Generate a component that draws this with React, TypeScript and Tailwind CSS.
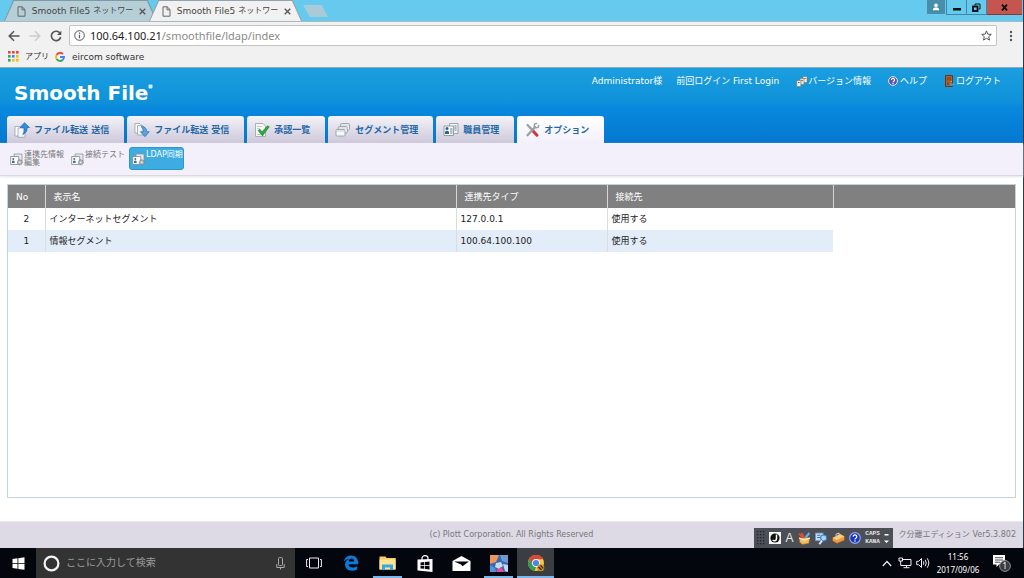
import * as React from "react";

const TABS = [
  { label: "ファイル転送 送信", icon: <SendIcon /> },
  { label: "ファイル転送 受信", icon: <ReceiveIcon /> },
  { label: "承認一覧", icon: <ApproveIcon /> },
  { label: "セグメント管理", icon: <SegmentIcon /> },
  { label: "職員管理", icon: <StaffIcon /> },
  { label: "オプション", icon: <ToolsIcon />, active: true },
];

const SUB_ITEMS = [
  { label: "連携先情報編集" },
  { label: "接続テスト" },
  { label: "LDAP同期", active: true },
];

const ROWS = [
  { no: 2, name: "インターネットセグメント", type: "127.0.0.1", target: "使用する" },
  { no: 1, name: "情報セグメント", type: "100.64.100.100", target: "使用する" },
];

export default function App() {
  return (
    <div className="flex min-h-screen flex-col bg-white font-['DejaVu_Sans','Noto_Sans_CJK_JP',sans-serif] text-[9px] leading-3 text-[#222]">
      <div className="flex flex-1 flex-col border-r border-[#2b3a45]">
        <BrowserTabs />
        <BrowserToolbar />
        <AppHeader />
        <SubNav />
        <main className="mx-[7px] mt-2 mb-[23px] flex-1 border border-[#c3d3dc]">
          <LdapTable />
        </main>
        <footer className="relative flex h-[27px] items-center justify-center border-t border-[#e9e7ee] bg-[#dddae5] text-[8px] text-[#777]">
          <p>(c) Plott Corporation. All Rights Reserved</p>
          <p className="absolute right-[7px]">ク分離エディション Ver5.3.802</p>
          <ImeBar />
        </footer>
      </div>
      <Taskbar />
    </div>
  );
}

// ─── Browser chrome ───────────────────────────────────────────────────────────
function BrowserTabs() {
  return (
    <div className="flex h-[22px] items-end justify-between border-b border-[#a9b9c1] bg-[#66caee]">
      <div className="flex h-full items-end pl-1">
        <BrowserTab />
        <BrowserTab active />
        <button
          aria-label="新しいタブ"
          className="mb-1 ml-[9px] h-3 w-[25px] bg-[#a9cbd8] [clip-path:polygon(0_0,75%_0,100%_100%,28%_100%)]"
        />
      </div>
      <div className="flex h-full items-start pr-px">
        <button aria-label="ユーザー" className="mr-px flex h-[14px] w-[18px] items-center justify-center bg-[#468ea9]">
          <svg width="8" height="8" viewBox="0 0 8 8" fill="#fff">
            <circle cx="4" cy="2.4" r="1.8" />
            <path d="M1 7.2V6c0-1 1.500-1.600 3-1.600s3 .6 3 1.600v1.200z" />
          </svg>
        </button>
        <button aria-label="最小化" className="flex h-[15px] w-[21px] items-center justify-center border border-t-0 border-[#3f87a3]">
          <svg width="8" height="8" viewBox="0 0 8 8"><path d="M0 5h8v2.500H0z" fill="#111" /></svg>
        </button>
        <button aria-label="元に戻す" className="flex h-[15px] w-5 items-center justify-center border-r border-b border-[#3f87a3]">
          <svg width="9" height="9" viewBox="0 0 9 9" fill="none" stroke="#111">
            <path d="M3 2.500V1h5v5H6.500" />
            <path d="M1 3.500h4.500V8H1z" strokeWidth="1.800" />
          </svg>
        </button>
        <button aria-label="閉じる" className="flex h-[15px] w-[35px] items-center justify-center border-b border-[#823a3a] bg-[#c4554f]">
          <svg width="7" height="7" viewBox="0 0 7 7"><path d="M1 .7l5 5.600M6 .7L1 6.300" stroke="#111" strokeWidth="1.900" /></svg>
        </button>
      </div>
    </div>
  );
}

function BrowserTab({ active }: { active?: boolean }) {
  return (
    <div
      className={
        "-mr-2 flex h-[21px] w-[153px] pt-px [clip-path:polygon(6%_0,94%_0,100%_100%,0_100%)] " +
        (active ? "z-10 bg-[#8fa5ae]" : "bg-[#7f9aa5]")
      }
    >
      <div
        className={
          "mx-px flex min-w-0 flex-1 items-center justify-between pr-2.5 pl-3 text-[#444] [clip-path:polygon(6%_0,94%_0,100%_100%,0_100%)] " +
          (active ? "bg-[#f1f1f1]" : "bg-[#b6cfd7]")
        }
      >
        <svg width="9" height="11" viewBox="0 0 9 11" fill="none" stroke="#666" className="shrink-0">
          <path d="M1 .8h4.200L8 3.600v6.600H1z" />
          <path d="M5 .8v3h3" />
        </svg>
        <span className="flex gap-[3px] whitespace-nowrap">
          <span>Smooth File5</span>
          <span className="text-[8px]">ネットワー</span>
        </span>
        <button aria-label="タブを閉じる">
          <svg width="7" height="7" viewBox="0 0 7 7"><path d="M.7.7l5.600 5.600M6.300.7L.7 6.300" stroke="#555" strokeWidth="1.300" /></svg>
        </button>
      </div>
    </div>
  );
}

function BrowserToolbar() {
  return (
    <div className="border-b border-[#8fa9b8] bg-[#f1f1f1]">
      <div className="flex items-center pt-[3px] pr-2.5 pl-2">
        <button aria-label="戻る" className="w-[21px]">
          <svg width="12" height="12" viewBox="0 0 12 12" fill="none" stroke="#555" strokeWidth="1.500">
            <path d="M11.500 6H1.500M6 1.200L1.200 6 6 10.800" />
          </svg>
        </button>
        <button aria-label="進む" className="w-[21px]">
          <svg width="12" height="12" viewBox="0 0 12 12" fill="none" stroke="#ccc" strokeWidth="1.500">
            <path d="M.5 6h10M6 1.200L10.800 6 6 10.800" />
          </svg>
        </button>
        <button aria-label="再読み込み" className="w-[19px]">
          <svg width="12" height="12" viewBox="0 0 12 12" fill="none" stroke="#555" strokeWidth="1.600">
            <path d="M10.200 3.600A4.700 4.700 0 1 0 10.700 7" />
            <path d="M11.300.8v4.300H7z" fill="#555" stroke="none" />
          </svg>
        </button>
        <div className="flex h-[21px] flex-1 items-center rounded-xs border border-[#c4c4c4] bg-white px-1 font-['Noto_Sans','Noto_Sans_CJK_JP',sans-serif] text-[11px]">
          <svg width="11" height="11" viewBox="0 0 11 11" fill="none" stroke="#555">
            <circle cx="5.500" cy="5.500" r="4.800" />
            <path d="M5.500 4.700v3.500M5.500 2.500v1.200" strokeWidth="1.200" />
          </svg>
          <a href="#url" className="ml-[5px] flex-1 text-[#8a8a8a]">
            <span className="text-[#222]">100.64.100.21</span>/smoothfile/ldap/index
          </a>
          <button aria-label="ブックマーク">
            <svg width="11" height="11" viewBox="0 0 11 11" fill="none" stroke="#555">
              <path d="M5.500.9l1.300 3.200 3.500.3-2.600 2.300.8 3.400-3-1.800-3 1.800.8-3.400L.7 4.400l3.500-.3z" />
            </svg>
          </button>
        </div>
        <button aria-label="メニュー" className="ml-3">
          <svg width="4" height="12" viewBox="0 0 4 12" fill="#555">
            <circle cx="2" cy="2" r="1.200" />
            <circle cx="2" cy="6" r="1.200" />
            <circle cx="2" cy="10" r="1.200" />
          </svg>
        </button>
      </div>
      <div className="flex h-[21px] items-center pl-2 text-[#333]">
        <AppsIcon />
        <a href="#apps" className="ml-1.5 w-[30px] text-[8px]">アプリ</a>
        <svg width="10" height="10" viewBox="0 0 10 10" fill="none" strokeWidth="1.900">
          <path d="M8 2.100A4 4 0 0 0 1.600 3" stroke="#ea4335" />
          <path d="M1.600 3a4 4 0 0 0 0 4" stroke="#fbbc05" />
          <path d="M1.600 7A4 4 0 0 0 7.600 8" stroke="#34a853" />
          <path d="M7.600 8A4 4 0 0 0 9 5H5" stroke="#4285f4" />
        </svg>
        <a href="#eircom" className="ml-[7px]">eircom software</a>
      </div>
    </div>
  );
}

function AppsIcon() {
  const colors = ["#ea4335", "#ea4335", "#ea4335", "#34a853", "#4285f4", "#fbbc05", "#34a853", "#fbbc05", "#fbbc05"];
  return (
    <svg width="11" height="11" viewBox="0 0 11 11">
      {colors.map((c, i) => (
        <rect key={i} x={(i % 3) * 4} y={Math.floor(i / 3) * 4} width="2.600" height="2.600" fill={c} />
      ))}
    </svg>
  );
}

// ─── Application header ───────────────────────────────────────────────────────
function AppHeader() {
  return (
    <header className="flex h-[75px] flex-col justify-between bg-[linear-gradient(#1b9fe0_0%,#0e91d8_46%,#0889dd_52%,#0578d2_100%)]">
      <div className="flex items-start justify-between pr-[22px] pl-3.5 text-white">
        <a href="#top" aria-label="Smooth File" className="mt-[15px] flex text-[20px] leading-5 font-bold">
          Smooth File
          <svg width="5" height="5" viewBox="0 0 5 5" className="mt-px"><rect x=".5" y=".5" width="4" height="4" rx="1" fill="#cfe9f8" /></svg>
        </a>
        <nav className="mt-[7px] flex items-center">
          <span>Administrator様</span>
          <span className="ml-3.5">前回ログイン First Login</span>
          <a href="#version" className="ml-[17px] flex items-center">
            <svg width="12" height="11" viewBox="0 0 12 11" stroke="#7d756b" strokeWidth=".6">
              <path d="M7 .5h4v6H7z" fill="#f7f3ea" />
              <path d="M4 2.500h4v6H4z" fill="#e9e1d2" />
              <path d="M.8 4.500h4v6h-4z" fill="#f4eee2" />
              <path d="M2 6.500h1.600M5.300 4.500h1.500M8.300 2.500h1.500" stroke="#6f675c" strokeWidth="1" />
            </svg>
            バージョン情報
          </a>
          <a href="#help" className="ml-[17px] flex items-center gap-0.5">
            <HelpBadge size={10} color="#5a53b5" ring="#e8e6fa" />
            ヘルプ
          </a>
          <a href="#logout" className="ml-[17px] flex items-center gap-px">
            <svg width="11" height="12" viewBox="0 0 11 12">
              <path d="M1.500.5h7v11h-7z" fill="#a85f31" stroke="#6d3716" />
              <path d="M3 2h1.500v3.500H3zM5.500 2H7v3.500H5.500zM3 7h1.500v3H3z" fill="#8a4722" />
              <path d="M6 9.500h4.500" stroke="#3fa3e6" strokeWidth="2" />
              <circle cx="7.200" cy="6.500" r=".6" fill="#f5cd73" />
            </svg>
            ログアウト
          </a>
        </nav>
      </div>
      <ul className="flex gap-[3px] pl-[7px]">
        {TABS.map((tab) => (
          <li key={tab.label}>
            <a
              href="#tab"
              className={
                "flex h-[27px] items-center gap-1 rounded-t-[3px] pr-[15px] pl-[7px] font-bold whitespace-nowrap text-[#1f68a8] " +
                (tab.active ? "bg-linear-to-b from-white to-[#f3f0fb]" : "bg-linear-to-b from-[#f4f2f8] to-[#cdc9da]")
              }
            >
              {tab.icon}
              {tab.label}
            </a>
          </li>
        ))}
      </ul>
    </header>
  );
}

function SubNav() {
  return (
    <nav className="flex h-[33px] gap-[3px] border-b border-[#d9d9df] bg-[#f3f0fb] pt-1 pl-[7px] text-[8px] leading-2 shadow-[0_1px_2px_#e4e4ea]">
      {SUB_ITEMS.map((item) => (
        <a
          key={item.label}
          href="#sub"
          className={
            "flex h-[23px] gap-px rounded-[3px] border pt-[3px] pl-0.5 " +
            (item.active
              ? "w-[55px] border-[#2d97cc] bg-[#3dace1] text-white"
              : "w-[58px] border-transparent text-[#777]")
          }
        >
          <SettingIcon />
          <span className="flex-1">{item.label}</span>
        </a>
      ))}
    </nav>
  );
}

function LdapTable() {
  return (
    <table className="w-full table-fixed border-collapse text-left">
      <colgroup>
        <col className="w-[37px]" />
        <col className="w-[411px]" />
        <col className="w-[151px]" />
        <col className="w-[226px]" />
        <col />
      </colgroup>
      <thead>
        <tr className="h-[23px] bg-[#808080] text-white [&>th]:border-r [&>th]:border-[#d5d5d5] [&>th]:px-2 [&>th]:font-normal">
          <th>No</th>
          <th>表示名</th>
          <th>連携先タイプ</th>
          <th>接続先</th>
          <td />
        </tr>
      </thead>
      <tbody>
        {ROWS.map((row, i) => (
          <tr
            key={row.no}
            className={
              "h-[22px] [&>td]:px-1 [&>td:nth-child(-n+3)]:border-r [&>td:nth-child(-n+3)]:border-[#dcdcdc] " +
              (i % 2 ? "[&>td:not(:last-child)]:bg-[#e2edf9]" : "")
            }
          >
            <td className="text-center">{row.no}</td>
            <td>{row.name}</td>
            <td>{row.type}</td>
            <td>{row.target}</td>
            <td />
          </tr>
        ))}
      </tbody>
    </table>
  );
}

// ─── IME bar and taskbar ──────────────────────────────────────────────────────
function ImeBar() {
  return (
    <div className="absolute right-[130px] bottom-0 flex h-5 w-[139px] items-center justify-between bg-[#4c5056] pr-1 pl-[3px] text-[#e8e8e8]">
      <svg width="8" height="14" viewBox="0 0 8 14" fill="#22262b">
        {[0, 1, 2, 3, 4].map((r) => [0, 1, 2].map((c) => <rect key={`${r}${c}`} x={c * 3} y={r * 3} width="1.300" height="1.300" />))}
      </svg>
      <svg width="12" height="12" viewBox="0 0 12 12">
        <rect width="12" height="12" fill="#f5f5f5" />
        <circle cx="6" cy="6" r="4.600" fill="#111" />
        <path d="M7.500 2.500v4.300a2 2 0 0 1-3.700 1" fill="none" stroke="#fff" strokeWidth="1.500" />
      </svg>
      <span className="font-['Liberation_Sans',sans-serif] text-[12px]">A</span>
      <svg width="13" height="13" viewBox="0 0 12 12">
        <path d="M1 5l10 0-1 5.500-6 1-2.500-2z" fill="#f0bd61" stroke="#9d5f22" strokeWidth=".6" />
        <path d="M1 1.500l4 4M3.500 1l2 4" stroke="#e14b3a" strokeWidth="1.800" />
        <path d="M7 5l3.500-4" stroke="#5ab0f0" strokeWidth="2" />
        <path d="M1 5.500l5 2 5-2" fill="none" stroke="#fff1c8" />
      </svg>
      <svg width="13" height="13" viewBox="0 0 12 12">
        <path d="M.5 1h7v7h-7z" fill="#c7dcf4" stroke="#6a9ad0" strokeWidth=".8" />
        <path d="M2 3h3M2 5h3" stroke="#3b70b3" />
        <circle cx="8" cy="5.500" r="2.800" fill="#a9d4f7" stroke="#3d7bc4" />
        <path d="M6.500 8L4 11.300" stroke="#d9e7f6" strokeWidth="1.800" />
      </svg>
      <svg width="13" height="12" viewBox="0 0 13 12">
        <path d="M.5 6L8 2l4.500 2.500v3.800L5 11.500.5 9z" fill="#e99a42" stroke="#8e5319" strokeWidth=".6" />
        <path d="M.5 6L8 2l4.500 2.500L5 8z" fill="#f8cb82" />
        <path d="M4 3.700V2.300L7 1v1.500" fill="none" stroke="#d5d5d5" />
      </svg>
      <HelpBadge size={12} color="#1834b8" ring="#8fa8f0" />
      <span className="flex flex-col font-['Liberation_Mono',monospace] text-[6px] leading-2 font-bold">
        <span>CAPS</span>
        <span>KANA</span>
      </span>
      <svg width="5" height="12" viewBox="0 0 5 12" fill="#fff"><path d="M.5 2h4v1.500h-4zM0 8.500h5L2.500 11z" /></svg>
    </div>
  );
}

function Taskbar() {
  return (
    <div className="flex h-[30px] items-stretch bg-[#03060c] text-white">
      <button aria-label="スタート" className="flex w-9 items-center justify-center">
        <svg width="13" height="13" viewBox="0 0 13 13" fill="#fff">
          <path d="M.5 2l5-.7v4.900h-5zM6.300 1.200L12.500.3v5.900H6.300zM.5 7h5v4.800l-5-.7zM6.300 7h6.200v5.800l-6.200-.9z" />
        </svg>
      </button>
      <label className="flex w-[259px] items-center bg-[#333] pr-2.5 pl-[7px]">
        <svg width="17" height="17" viewBox="0 0 17 17"><circle cx="8.500" cy="8.500" r="6.900" fill="none" stroke="#f4f4f4" strokeWidth="2.200" /></svg>
        <input
          type="text"
          aria-label="検索"
          placeholder="ここに入力して検索"
          className="ml-1.5 min-w-0 flex-1 bg-transparent text-[10px] outline-none placeholder:text-[#9c9c9c]"
        />
        <svg width="9" height="13" viewBox="0 0 9 13" fill="none" stroke="#aaa">
          <rect x="2.500" y=".6" width="4" height="8" rx="1" />
          <path d="M.8 7v3.500h7.400V7M4.500 10.500v2" />
        </svg>
      </label>
      <TaskButton label="タスクビュー">
        <svg width="16" height="12" viewBox="0 0 16 12" fill="none" stroke="#eee">
          <path d="M3.500 1h9v10h-9zM2 2.500H.6v7H2M14 2.500h1.400v7H14" />
        </svg>
      </TaskButton>
      <TaskButton label="Edge">
        <svg width="16" height="16" viewBox="0 0 16 16">
          <path
            d="M.7 7.100C1.300 3 4.200.4 8 .4c4.600 0 7.200 3.200 7.200 7.200v1.700H5.500c.1 2.300 2 3.200 4.200 3.200 1.700 0 3.200-.5 4.500-1.300v3.300c-1.500.8-3.200 1.200-5.200 1.200-4.200 0-7-2.400-7-6.100 0-2.500 1.400-4.500 3.700-5.600C3.200 4.300 1.600 5.300.7 7.100zM5.600 6.500h5.600c0-1.800-.9-2.900-2.600-2.900-1.700 0-2.700 1.100-3 2.900z"
            fill="#0a7bda"
          />
        </svg>
      </TaskButton>
      <TaskButton label="エクスプローラー" open>
        <svg width="17" height="14" viewBox="0 0 17 14">
          <path d="M.5 0.500h6l1.200 1.500h9v11.500H.5z" fill="#f5cf63" />
          <path d="M.5 3.500h16v10H.5z" fill="#ffe493" />
          <path d="M3 14V8.500h11V14h-3v-2.500H6V14z" fill="#36a7e6" />
        </svg>
      </TaskButton>
      <TaskButton label="ストア">
        <svg width="16" height="17" viewBox="0 0 16 17">
          <path d="M5 5V3a3 2.300 0 0 1 6 0v2" fill="none" stroke="#fff" strokeWidth="1.200" />
          <path d="M.5 4.500l15-.5v13L.5 15.500z" fill="#fff" />
          <path d="M3.500 7.500l3.800-.4v3H3.500zM8 7l4.500-.4v3.500H8zM3.500 10.800h3.800v3l-3.800-.4zM8 10.800h4.500v3.600L8 13.900z" fill="#05070c" />
        </svg>
      </TaskButton>
      <TaskButton label="メール">
        <svg width="19" height="15" viewBox="0 0 19 15">
          <path d="M.5 5L9.500 0l9 5v10H.5z" fill="#fff" />
          <path d="M2 5.500h15l-6.500 4.700-1.500-1.700z" fill="#05070c" />
        </svg>
      </TaskButton>
      <TaskButton label="ペイント" open>
        <svg width="18" height="17" viewBox="0 0 18 17">
          <rect width="18" height="17" fill="#3b69ae" />
          <path d="M0 0h9L6 7 0 9z" fill="#f3935c" />
          <path d="M10 0h8v8l-6-2z" fill="#6d9ad2" />
          <path d="M6 8l5-1 2 4-4 3-4-2z" fill="#c9d9ec" />
          <path d="M0 10l5 3 1 4H0z" fill="#4f94dc" />
          <path d="M7 15l4-3 3 5H7z" fill="#e94d95" />
          <path d="M13 9l5 1v7l-3-1z" fill="#c5d7ee" />
        </svg>
      </TaskButton>
      <TaskButton label="Chrome" open current>
        <svg width="18" height="18" viewBox="0 0 18 18">
          <circle cx="9" cy="9" r="8" fill="#f7c83b" />
          <path d="M2.100 5A8 8 0 0 1 16 5.200H9L5.700 11z" fill="#dc4437" />
          <path d="M2.100 5l3.800 6.300L9 13l-1.500 3.900A8 8 0 0 1 2.100 5z" fill="#2f9b56" />
          <circle cx="9" cy="9" r="3.900" fill="#fff" />
          <circle cx="9" cy="9" r="3.100" fill="#4a86ee" />
          <circle cx="13.800" cy="13.800" r="3.500" fill="#c98d22" />
          <path d="M11.500 13l3 2.800M13.500 11.500l2.800 2.800" stroke="#332617" strokeWidth="1.200" />
        </svg>
      </TaskButton>
      <div className="ml-auto flex items-center pr-3">
        <svg width="10" height="7" viewBox="0 0 10 7" fill="none" stroke="#eee" strokeWidth="1.200"><path d="M.8 6L5 1.500 9.200 6" /></svg>
        <svg width="14" height="12" viewBox="0 0 14 12" fill="none" stroke="#eee" className="ml-1.5">
          <path d="M4.500 2.500h8.500v6H4M8.500 8.500v2M5.500 10.700h6M1 1h3.500v3H1zM2.700 4v4.500H5" />
        </svg>
        <svg width="14" height="12" viewBox="0 0 14 12" fill="none" stroke="#eee" className="ml-1">
          <path d="M.7 4.300h2L5.500 1.500v9L2.700 7.700h-2z" />
          <path d="M7.300 4.300q1.200 1.700 0 3.400M9.200 2.800q2.200 3.200 0 6.400M11.200 1.300q3.200 4.700 0 9.400" />
        </svg>
        <time className="ml-1.5 flex w-11 flex-col text-center font-['Noto_Sans',sans-serif] text-[8px] leading-[13px]">
          <span>11:56</span>
          <span>2017/09/06</span>
        </time>
        <button aria-label="通知 1 件" className="relative ml-3">
          <svg width="20" height="18" viewBox="0 0 20 18">
            <path d="M1 1h12v9.500H7L4.500 13v-2.500H1z" fill="#fff" />
            <path d="M3 3.700h8M3 6h8M3 8.200h5" stroke="#222" strokeWidth=".8" />
            <circle cx="13" cy="12" r="5.400" fill="#3a3d42" stroke="#8c8f94" />
          </svg>
          <span className="absolute right-[5px] bottom-0 font-['Noto_Sans',sans-serif] text-[8px] leading-3">1</span>
        </button>
      </div>
    </div>
  );
}

function TaskButton({
  label,
  open,
  current,
  children,
}: {
  label: string;
  open?: boolean;
  current?: boolean;
  children: React.ReactNode;
}) {
  return (
    <button
      aria-label={label}
      className={"relative flex w-[37px] items-center justify-center " + (current ? "bg-[#3a3d42]" : "")}
    >
      {children}
      {open && <span className={"absolute bottom-0 h-0.5 bg-[#78b8ea] " + (current ? "inset-x-0" : "inset-x-1")} />}
    </button>
  );
}

// ─── Icons ────────────────────────────────────────────────────────────────────
function HelpBadge({ size, color, ring }: { size: number; color: string; ring: string }) {
  return (
    <svg width={size} height={size} viewBox="0 0 12 12">
      <circle cx="6" cy="6" r="5.300" fill={color} stroke={ring} strokeWidth="1.200" />
      <path d="M4.200 4.700a1.800 1.800 0 1 1 2.700 1.500c-.6.400-.9.600-.9 1.200" fill="none" stroke="#fff" strokeWidth="1.300" />
      <circle cx="6" cy="9" r=".8" fill="#fff" />
    </svg>
  );
}

function SendIcon() {
  return (
    <svg width="16" height="16" viewBox="0 0 16 16" strokeWidth=".7">
      <path d="M1 4.500h4.500L8 7v7H1z" fill="#fff" stroke="#8995a3" />
      <path d="M4 6h4.500L11 8.500v6.800H4z" fill="#f4f6f9" stroke="#8995a3" />
      <path d="M10.500.7L15.500 5.500h-2.400c.2 3.300-1 5.700-4.300 7 1.500-2.200 1.400-4.500 1.200-7H6z" fill="#2f8fdd" stroke="#1d68ac" />
    </svg>
  );
}

function ReceiveIcon() {
  return (
    <svg width="16" height="16" viewBox="0 0 16 16" strokeWidth=".7">
      <path d="M1 1.500h5L8.500 4v7H1z" fill="#fff" stroke="#8995a3" />
      <path d="M3.500 3.500h5L11 6v7H3.500z" fill="#f4f6f9" stroke="#8995a3" />
      <path d="M7 4.500c3.500-.2 5.600 1.500 5.800 5.200h2.500l-4.300 5-4.700-5H9c.1-2.300-.4-4-2-5.200z" fill="#5aa3e0" stroke="#2c6fae" />
    </svg>
  );
}

function ApproveIcon() {
  return (
    <svg width="16" height="16" viewBox="0 0 16 16">
      <path d="M1.500 1.500h7.500l2.500 2.500v10.500h-10z" fill="#f6f8f8" stroke="#93a3a6" strokeWidth=".8" />
      <path d="M3 4.500h5M3 6.500h3M3 12.500h6" stroke="#b7c3c6" strokeWidth=".8" />
      <path d="M4 8.500l2-1.300 2 2.600 5.500-6 1.800 1L8.500 14z" fill="#2aa83a" stroke="#177a26" strokeWidth=".5" />
    </svg>
  );
}

function SegmentIcon() {
  return (
    <svg width="16" height="16" viewBox="0 0 16 16" fill="#f7f8f9" stroke="#8c989f" strokeWidth=".8">
      <rect x="5.500" y="1.500" width="9" height="6.500" rx="1" />
      <rect x="3.300" y="4.500" width="9" height="6.500" rx="1" />
      <rect x="1" y="7.500" width="9" height="6.500" rx="1" />
      <path d="M1.500 9h8M3.800 6h8M6 3h8" stroke="#b9c3c8" />
    </svg>
  );
}

function StaffIcon() {
  return (
    <svg width="16" height="16" viewBox="0 0 16 16">
      <path d="M6.500 1.500h8.500v10H6.500z" fill="#edf1f2" stroke="#8c989f" strokeWidth=".8" />
      <path d="M1 4h9.500v9.500H1z" fill="#f9fafb" stroke="#7c8a92" strokeWidth=".8" />
      <circle cx="4" cy="6.500" r="1.500" fill="#33608f" />
      <path d="M2 12V9.800q2-2 4 0V12z" fill="#33608f" />
      <path d="M7 7h2.500M7 9h2.500M7 11h2.500M11.500 4h2M11.500 6h2M11.500 8h2" stroke="#5f7580" strokeWidth=".9" />
    </svg>
  );
}

function ToolsIcon() {
  return (
    <svg width="16" height="16" viewBox="0 0 16 16" fill="none" strokeLinecap="round">
      <path d="M3.500 3l6 6" stroke="#9a9fa4" strokeWidth="2.200" />
      <path d="M9 9l4 4.200" stroke="#d93038" strokeWidth="3" />
      <path d="M3.500 13.200L11 5.200" stroke="#9a9fa4" strokeWidth="2.400" />
      <path d="M10.500 2.200c-.9 1.900.4 4.200 3.600 3.200M10.600 2l1.900-.6M14.200 5.300l.5-1.900" stroke="#9a9fa4" strokeWidth="1.500" />
    </svg>
  );
}

function SettingIcon() {
  return (
    <svg width="13" height="13" viewBox="0 0 13 13" className="mt-0.5 shrink-0">
      <path d="M4 1h8v7H4z" fill="#e6eaec" stroke="#8b9398" strokeWidth=".8" />
      <path d="M.7 3.500h8v8h-8z" fill="#fff" stroke="#7c858b" strokeWidth=".8" />
      <path d="M2 10V8q1.400-1.200 2.600 0v2z" fill="#4c6f85" />
      <circle cx="3.300" cy="6" r="1" fill="#4c6f85" />
      <circle cx="9.800" cy="9.300" r="2.500" fill="#aeb4b8" stroke="#747c81" strokeWidth=".9" strokeDasharray="1.200 .6" />
      <circle cx="9.800" cy="9.300" r=".8" fill="#fff" />
    </svg>
  );
}
